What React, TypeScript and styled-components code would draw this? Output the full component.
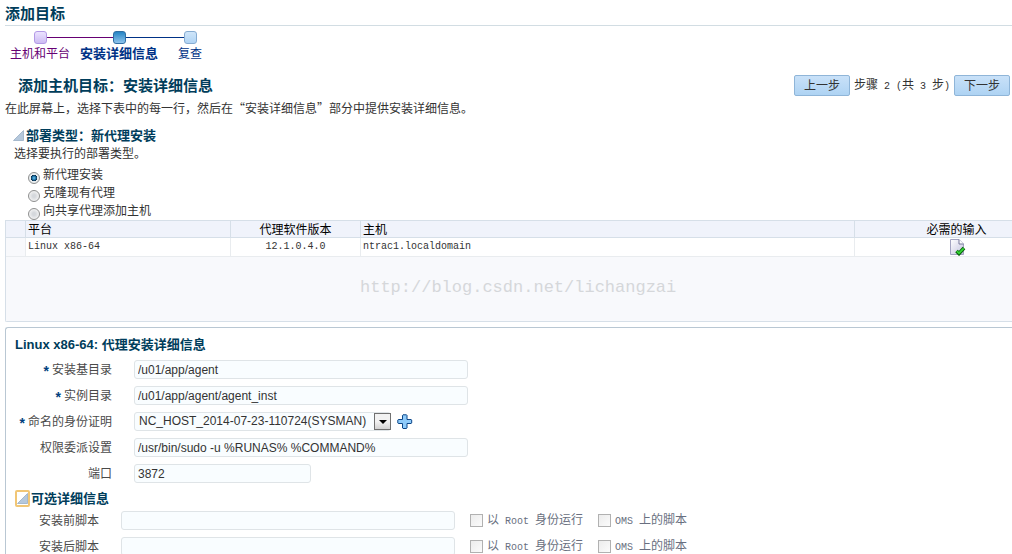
import React from "react";
import styled, { createGlobalStyle, css } from "styled-components";

const CJK = `"Noto Sans CJK SC", "Liberation Sans", sans-serif`;
const LATIN = `"Liberation Sans", "Noto Sans CJK SC", sans-serif`;
const MONO = `"Liberation Mono", "Noto Sans CJK SC", monospace`;

const GlobalStyle = createGlobalStyle`
  * { box-sizing: border-box; }
  html, body { height: 100%; }
  body {
    margin: 0;
    overflow: hidden;
    background: #fff;
    color: #333;
    font: 12px/18px ${CJK};
  }
  h1, h2, h3, p, ol, fieldset { margin: 0; padding: 0; border: 0; }
  button, input, select { font: inherit; color: inherit; margin: 0; }
`;

const Page = styled.main`
  padding: 2px 0 0 5px;
`;

const Title = styled.h1`
  height: 24px;
  border-bottom: 1px solid #d2dde3;
  color: #003d5b;
  font: bold 15px/22px ${CJK};
`;

const Train = styled.ol`
  display: flex;
  height: 48px;
  padding-top: 5px;
  list-style: none;
`;

const Stop = styled.li<{ $width: number }>`
  width: ${(p) => p.$width}px;
  text-align: center;
  white-space: nowrap;
`;

const Track = styled.div`
  display: flex;
  align-items: center;
  height: 13px;
`;

const Rail = styled.span<{ $color?: string }>`
  flex: 1;
  height: 1px;
  background: ${(p) => p.$color ?? "transparent"};
`;

const tones = {
  visited: css`border-color: #b39ae6; background: linear-gradient(#ebe2ff, #cdbcf3);`,
  current: css`border-color: #2f6ea3; background: linear-gradient(#2584c4, #8fc4ec);`,
  next: css`border-color: #86acd2; background: linear-gradient(#cfe5f9, #b0d4f4);`,
};

const Node = styled.span<{ $tone: keyof typeof tones }>`
  width: 13px;
  height: 13px;
  border: 1px solid;
  border-radius: 3px;
  ${(p) => tones[p.$tone]}
`;

const StopLink = styled.a<{ $visited?: boolean; $current?: boolean }>`
  color: ${(p) => (p.$visited ? "#660073" : "#003286")};
  font-size: ${(p) => (p.$current ? 13 : 12)}px;
  font-weight: ${(p) => (p.$current ? "bold" : "normal")};
  text-decoration: none;
`;

const HeaderBar = styled.header`
  display: flex;
  align-items: center;
  justify-content: space-between;
  height: 22px;
  padding: 0 2px 0 13px;
`;

const Subtitle = styled.h2`
  color: #003d5b;
  font: bold 15px/20px ${CJK};
`;

const StepNav = styled.nav`
  display: flex;
  align-items: center;
  gap: 4px;
`;

const NavButton = styled.button`
  width: 56px;
  height: 21px;
  padding: 0;
  border: 1px solid #8fb5d8;
  border-radius: 2px;
  background: linear-gradient(#c9e1f8, #aed3f3);
  line-height: 18px;
`;

const Mono = styled.span`
  font-family: ${MONO};
  font-size: 10px;
  white-space: pre;
`;

const Intro = styled.p`
  padding-top: 2px;
  line-height: 20px;
`;

const SectionTitle = styled.h3`
  display: flex;
  align-items: center;
  gap: 2px;
  height: 18px;
  color: #003d5b;
  font: bold 13px/18px ${CJK};
`;

const Disclosure = styled.button<{ $focused?: boolean }>`
  display: flex;
  align-items: center;
  justify-content: center;
  width: ${(p) => (p.$focused ? 15 : 11)}px;
  height: ${(p) => (p.$focused ? 17 : 11)}px;
  padding: 0;
  border: ${(p) => (p.$focused ? "2px solid #f1c675" : "0")};
  border-radius: 2px;
  background: none;
`;

const DeploySection = styled.section`
  padding: 8px 0 0 8px;
`;

const DeployHint = styled.p`
  padding-left: 1px;
`;

const RadioGroup = styled.fieldset`
  display: flex;
  flex-direction: column;
  padding: 3px 0 1px 15px;
`;

const RadioLabel = styled.label`
  display: flex;
  align-items: center;
  gap: 3px;
  height: 18px;
`;

const Radio = styled.input`
  appearance: none;
  flex: none;
  width: 12px;
  height: 12px;
  margin-top: 8px;
  border: 1px solid #8e8f8f;
  border-radius: 50%;
  background: radial-gradient(circle, #d5d8dc 20%, #f4f4f4 75%);
  &:checked {
    background: radial-gradient(circle at 50% 50%, #6fc8f0 0, #14649a 30%, #0b2c45 42%, #e8ecee 50%);
  }
`;

const TablePanel = styled.section`
  height: 102px;
  border: solid #d6dfe8;
  border-width: 1px 0 1px 1px;
  border-bottom-left-radius: 2px;
  background: #f8f9fc;
`;

const Table = styled.table`
  width: 100%;
  table-layout: fixed;
  border-collapse: separate;
  border-spacing: 0;
`;

const HeadCell = styled.th<{ $center?: boolean; $last?: boolean }>`
  height: 17px;
  padding: 0 0 0 ${(p) => (p.$last ? 46 : p.$center ? 0 : 2)}px;
  border-bottom: 1px solid #d6dfe8;
  border-right: ${(p) => (p.$last ? "0" : "1px solid #d6dfe8")};
  background: #f0f3fb;
  color: #000;
  font-weight: normal;
  line-height: 16px;
  text-align: ${(p) => (p.$center ? "center" : "left")};
`;

const Cell = styled.td<{ $center?: boolean; $last?: boolean; $gutter?: boolean }>`
  height: 19px;
  padding: 0 0 0 ${(p) => (p.$last ? 48 : p.$center ? 0 : 2)}px;
  border-bottom: 1px solid #e9ecef;
  border-right: ${(p) => (p.$last ? "0" : "1px solid #e9ecef")};
  background: ${(p) => (p.$gutter ? "#f8f9fc" : "#fff")};
  font: 10px/18px ${MONO};
  text-align: ${(p) => (p.$center ? "center" : "left")};
  svg { display: block; margin: 0 auto; }
`;

const Watermark = styled.p`
  padding: 20px 0 0 354px;
  color: #d5d7da;
  font: 17px/22px ${MONO};
`;

const DetailPanel = styled.section`
  margin-top: 5px;
  padding: 8px 0 0 9px;
  border: solid #b9c7d3;
  border-width: 1px 0 0 1px;
  border-top-left-radius: 3px;
`;

const DetailTitle = styled.h3`
  color: #003d5b;
  font: bold 13px/18px ${LATIN};
`;

const Fields = styled.div`
  display: flex;
  flex-direction: column;
  gap: 7px;
  padding-top: 6px;
`;

const Row = styled.div<{ $labelWidth: number }>`
  display: grid;
  grid-template-columns: ${(p) => p.$labelWidth}px auto auto auto;
  justify-content: start;
  align-items: center;
  height: 19px;
`;

const FieldLabel = styled.label`
  display: flex;
  justify-content: flex-end;
  gap: 3px;
  height: 19px;
  padding-right: 22px;
  color: #4a4a4a;
  white-space: nowrap;
`;

const Required = styled.span`
  padding-top: 2px;
  color: #003f7d;
  font: bold 14px/18px ${LATIN};
`;

const field = css`
  height: 19px;
  border: 1px solid #dfe4e7;
  border-radius: 3px;
  background: #f9fdff;
  font: 12px/17px ${LATIN};
  color: #333;
`;

const TextInput = styled.input<{ $short?: boolean }>`
  ${field}
  width: ${(p) => (p.$short ? 177 : 334)}px;
  padding: 0 3px;
`;

const SelectBox = styled.div`
  position: relative;
  width: 257px;
  height: 19px;
`;

const Select = styled.select`
  ${field}
  appearance: none;
  display: block;
  width: 100%;
  padding: 0 18px 0 4px;
`;

const Arrow = styled.span`
  position: absolute;
  top: 1px;
  right: 0;
  display: flex;
  align-items: center;
  justify-content: center;
  width: 17px;
  height: 17px;
  border: 1px solid #707070;
  background: linear-gradient(#f2f2f2 50%, #d2d2d2);
  pointer-events: none;
`;

const AddButton = styled.button`
  margin-left: 6px;
  padding: 0;
  border: 0;
  background: none;
  line-height: 0;
`;

const OptionalTitle = styled(SectionTitle)`
  margin-top: 6px;
  gap: 1px;
`;

const OptionalFields = styled(Fields)`
  padding-top: 3px;
`;

const CheckLabel = styled.label`
  display: flex;
  align-items: center;
  gap: 4px;
  margin-left: 15px;
  color: #696f80;
  white-space: nowrap;
`;

const Check = styled.input`
  appearance: none;
  width: 13px;
  height: 13px;
  border: 1px solid #b1b1b1;
  background: linear-gradient(135deg, #ececec, #fbfbfb);
`;

const Triangle = () => (
  <svg width="11" height="11" viewBox="0 0 11 11" aria-hidden="true">
    <path d="M10.5 0.5V10.5H0.5Z" fill="#b5c8dc" stroke="#8fa6bf" strokeWidth="0.7" />
  </svg>
);

const DoneIcon = () => (
  <svg width="16" height="17" viewBox="0 0 16 17" role="img" aria-label="完成">
    <defs>
      <linearGradient id="sheet" x1="0" y1="0" x2="1" y2="1">
        <stop offset="0" stopColor="#fff" />
        <stop offset="1" stopColor="#c3c3df" />
      </linearGradient>
    </defs>
    <path d="M0.5 0.5H9L13.5 5V15.5H0.5Z" fill="url(#sheet)" stroke="#a3a3c0" />
    <path d="M9 0.5V5H13.5" fill="#fff" stroke="#77779a" />
    <path d="M6.5 12L9 14.5L14 9" fill="none" stroke="#075e09" strokeWidth="3.6" />
    <path d="M6.8 12.2L9 14.2L13.7 9.3" fill="none" stroke="#35d735" strokeWidth="1.8" />
  </svg>
);

const PlusIcon = () => (
  <svg width="16" height="16" viewBox="0 0 16 16" aria-hidden="true">
    <path
      d="M6 0.8H9.5L10 1.3V5.5H14.2L14.7 6V9L14.2 9.5H10V14L9.5 14.5H6L5.5 14V9.5H1.3L0.8 9V6L1.3 5.5H5.5V1.3Z"
      fill="#8fcbfa"
      stroke="#0c4688"
      strokeWidth="1"
    />
  </svg>
);

const deployTypes = ["新代理安装", "克隆现有代理", "向共享代理添加主机"];
const scripts = [
  { id: "pre", label: "安装前脚本" },
  { id: "post", label: "安装后脚本" },
];

function TextRow(props: { id: string; label: string; value: string; required?: boolean; short?: boolean }) {
  return (
    <Row $labelWidth={119}>
      <FieldLabel htmlFor={props.id}>
        {props.required && <Required>*</Required>}
        {props.label}
      </FieldLabel>
      <TextInput id={props.id} defaultValue={props.value} $short={props.short} />
    </Row>
  );
}

export default function App() {
  return (
    <Page>
      <GlobalStyle />
      <Title>添加目标</Title>
      <Train>
        <Stop $width={70}>
          <Track><Rail /><Node $tone="visited" /><Rail $color="#660073" /></Track>
          <StopLink href="#hosts" $visited>主机和平台</StopLink>
        </Stop>
        <Stop $width={88}>
          <Track><Rail $color="#660073" /><Node $tone="current" /><Rail $color="#003286" /></Track>
          <StopLink href="#details" $current>安装详细信息</StopLink>
        </Stop>
        <Stop $width={54}>
          <Track><Rail $color="#003286" /><Node $tone="next" /><Rail /></Track>
          <StopLink href="#review">复查</StopLink>
        </Stop>
      </Train>

      <HeaderBar>
        <Subtitle>添加主机目标：安装详细信息</Subtitle>
        <StepNav>
          <NavButton type="button">上一步</NavButton>
          <span>步骤<Mono> 2 (</Mono>共<Mono> 3 </Mono>步<Mono>)</Mono></span>
          <NavButton type="button">下一步</NavButton>
        </StepNav>
      </HeaderBar>
      <Intro>在此屏幕上，选择下表中的每一行，然后在“安装详细信息”部分中提供安装详细信息。</Intro>

      <DeploySection>
        <SectionTitle>
          <Disclosure type="button" aria-label="折叠"><Triangle /></Disclosure>
          部署类型：新代理安装
        </SectionTitle>
        <DeployHint>选择要执行的部署类型。</DeployHint>
        <RadioGroup>
          {deployTypes.map((name, i) => (
            <RadioLabel key={name}>
              <Radio type="radio" name="deploy" defaultChecked={i === 0} />
              {name}
            </RadioLabel>
          ))}
        </RadioGroup>
      </DeploySection>

      <TablePanel>
        <Table>
          <colgroup>
            <col style={{ width: 20 }} />
            <col style={{ width: 205 }} />
            <col style={{ width: 130 }} />
            <col />
            <col style={{ width: 157 }} />
          </colgroup>
          <thead>
            <tr>
              <HeadCell />
              <HeadCell>平台</HeadCell>
              <HeadCell $center>代理软件版本</HeadCell>
              <HeadCell>主机</HeadCell>
              <HeadCell $center $last>必需的输入</HeadCell>
            </tr>
          </thead>
          <tbody>
            <tr>
              <Cell $gutter />
              <Cell>Linux x86-64</Cell>
              <Cell $center>12.1.0.4.0</Cell>
              <Cell>ntrac1.localdomain</Cell>
              <Cell $center $last><DoneIcon /></Cell>
            </tr>
          </tbody>
        </Table>
        <Watermark>http://blog.csdn.net/lichangzai</Watermark>
      </TablePanel>

      <DetailPanel>
        <DetailTitle>Linux x86-64: 代理安装详细信息</DetailTitle>
        <Fields>
          <TextRow id="base" label="安装基目录" value="/u01/app/agent" required />
          <TextRow id="inst" label="实例目录" value="/u01/app/agent/agent_inst" required />
          <Row $labelWidth={119}>
            <FieldLabel htmlFor="cred"><Required>*</Required>命名的身份证明</FieldLabel>
            <SelectBox>
              <Select id="cred">
                <option>NC_HOST_2014-07-23-110724(SYSMAN)</option>
              </Select>
              <Arrow>
                <svg width="8" height="4" viewBox="0 0 8 4"><path d="M0 0H8L4 4Z" fill="#000" /></svg>
              </Arrow>
            </SelectBox>
            <AddButton type="button" aria-label="添加"><PlusIcon /></AddButton>
          </Row>
          <TextRow id="priv" label="权限委派设置" value="/usr/bin/sudo -u %RUNAS% %COMMAND%" />
          <TextRow id="port" label="端口" value="3872" short />
        </Fields>
        <OptionalTitle>
          <Disclosure type="button" aria-label="折叠" $focused><Triangle /></Disclosure>
          可选详细信息
        </OptionalTitle>
        <OptionalFields>
          {scripts.map((s) => (
            <Row key={s.id} $labelWidth={106}>
              <FieldLabel htmlFor={s.id}>{s.label}</FieldLabel>
              <TextInput id={s.id} />
              <CheckLabel>
                <Check type="checkbox" />
                <span>以<Mono> Root </Mono>身份运行</span>
              </CheckLabel>
              <CheckLabel>
                <Check type="checkbox" />
                <span><Mono>OMS </Mono>上的脚本</span>
              </CheckLabel>
            </Row>
          ))}
        </OptionalFields>
      </DetailPanel>
    </Page>
  );
}
